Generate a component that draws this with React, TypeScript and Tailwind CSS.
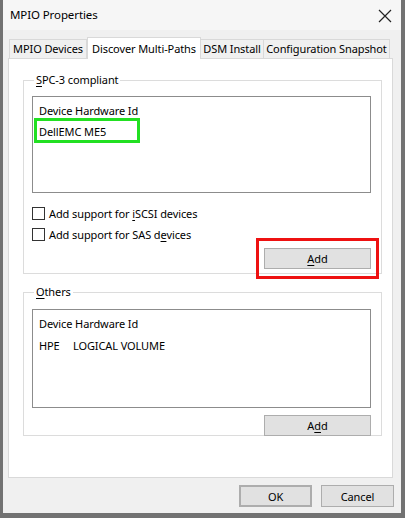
import React from "react";

const font = { fontFamily: '"Noto Sans", "Liberation Sans", sans-serif', letterSpacing: "-0.1px" };

function U({ children }: { children: React.ReactNode }) {
  return <span className="underline underline-offset-2">{children}</span>;
}

function Checkbox({ children }: { children: React.ReactNode }) {
  return (
    <div className="flex items-center h-[21px]">
      <div className="w-[13px] h-[13px] border border-[#333] bg-white" />
      <span className="ml-[4px] text-[11px] leading-none whitespace-nowrap">{children}</span>
    </div>
  );
}

function Button({ children, className = "" }: { children: React.ReactNode; className?: string }) {
  return (
    <div
      className={`flex items-center justify-center bg-[#e1e1e1] border border-[#adadad] text-[11px] leading-none whitespace-nowrap ${className}`}
    >
      {children}
    </div>
  );
}

export default function App() {
  return (
    <div
      style={font}
      className="w-[405px] h-[518px] bg-[#f0f0f0] border-l-[3px] border-r-[4px] border-b-[5px] border-[#727272] text-black flex flex-col"
    >
      {/* title bar */}
      <div className="h-[30px] flex items-center justify-between pl-[7px] pr-[9px] bg-[#f6f6f6]">
        <span className="text-[11.5px] whitespace-nowrap">MPIO Properties</span>
        <svg width="14" height="14" viewBox="0 0 14 14" className="mt-[1px]">
          <path d="M1 1 L13 13 M13 1 L1 13" stroke="#222" strokeWidth="1.2" />
        </svg>
      </div>

      {/* tabs */}
      <div className="pl-[5px] mt-[7px] flex items-end h-[22px] relative z-10 text-[11px] whitespace-nowrap">
        <div className="w-[78px] h-[19px] ml-[1px] border border-b-0 border-[#d9d9d9] bg-[#f0f0f0] flex items-center justify-center mb-[1px]">
          MPIO Devices
        </div>
        <div className="w-[114px] h-[22px] border border-b-0 border-[#d9d9d9] bg-white flex items-start pt-[3px] justify-center">
          Discover Multi-Paths
        </div>
        <div className="w-[63px] h-[19px] border border-b-0 border-l-0 border-[#d9d9d9] bg-[#f0f0f0] flex items-center justify-center mb-[1px]">
          DSM Install
        </div>
        <div className="w-[126px] h-[19px] border border-b-0 border-l-0 border-[#d9d9d9] bg-[#f0f0f0] flex items-center justify-center mb-[1px]">
          Configuration Snapshot
        </div>
      </div>

      {/* panel */}
      <div className="ml-[5px] w-[385px] h-[420px] -mt-[1px] border border-[#d9d9d9] bg-white pl-[14px] pt-[13px]">
        <fieldset className="w-[359px] h-[202px] border border-[#dcdcdc] pl-[8px] pr-[10px]">
          <legend className="text-[11px] ml-[2px] px-[2px] leading-[16px]">
            <U>S</U>PC-3 compliant
          </legend>
          <div className="mt-[8px] h-[97px] border border-[#8c8c8c] pl-[6px] pt-[6px] text-[11px]">
            <div className="h-[16px] leading-[16px]">Device Hardware Id</div>
            <div className="relative mt-[5px] h-[16px] leading-[16px]">
              DellEMC ME5
              <div className="absolute left-[-5px] top-[-6px] w-[106px] h-[25px] border-[3px] border-[#22e022]" />
            </div>
          </div>
          <div className="mt-[10px]">
            <Checkbox>
              Add support for <U>i</U>SCSI devices
            </Checkbox>
            <Checkbox>
              Add support for SAS d<U>e</U>vices
            </Checkbox>
          </div>
          <div className="flex justify-end mt-[3px]">
            <div className="relative">
              <Button className="w-[107px] h-[21px]">
                <U>A</U>dd
              </Button>
              <div className="absolute left-[-8px] top-[-10px] w-[123px] h-[41px] border-[3px] border-[#ee1111]" />
            </div>
          </div>
        </fieldset>

        <fieldset className="mt-[10px] w-[359px] h-[152px] border border-[#dcdcdc] pl-[8px] pr-[10px]">
          <legend className="text-[11px] ml-[2px] px-[2px] leading-[16px]">
            <U>O</U>thers
          </legend>
          <div className="mt-[9px] h-[99px] border border-[#8c8c8c] pl-[6px] pt-[6px] text-[11px]">
            <div className="h-[16px] leading-[16px]">Device Hardware Id</div>
            <div className="mt-[6px] h-[16px] leading-[16px] flex">
              <span className="w-[34px]">HPE</span>
              <span>LOGICAL VOLUME</span>
            </div>
          </div>
          <div className="flex justify-end mt-[7px]">
            <Button className="w-[107px] h-[21px]">
              A<U>d</U>d
            </Button>
          </div>
        </fieldset>
      </div>

      {/* footer buttons */}
      <div className="flex justify-end gap-[9px] pr-[7px] mt-[7px]">
        <Button className="w-[73px] h-[22px] border-2 border-[#0078d7]">OK</Button>
        <Button className="w-[73px] h-[22px]">Cancel</Button>
      </div>
    </div>
  );
}
